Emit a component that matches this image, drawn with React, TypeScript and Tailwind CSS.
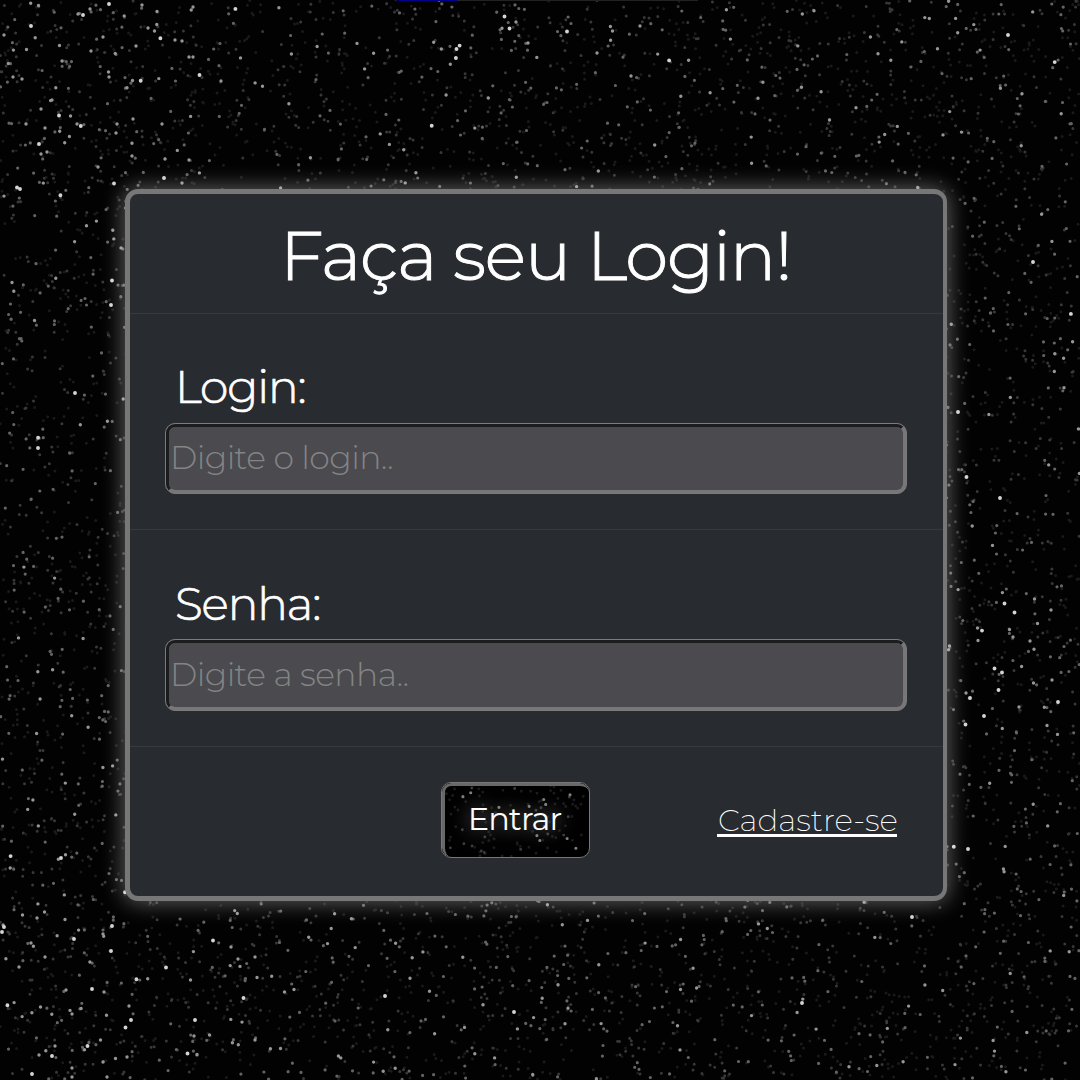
import React from 'react';

function random(seed: number) {
  let s = seed;
  return () => {
    s = (s + 0x6d2b79f5) | 0;
    let t = Math.imul(s ^ (s >>> 15), 1 | s);
    t = (t + Math.imul(t ^ (t >>> 7), 61 | t)) ^ t;
    return ((t ^ (t >>> 14)) >>> 0) / 4294967296;
  };
}

function scatter(seed: number, count: number, w: number, h: number) {
  const next = random(seed);
  let d = '';
  for (let i = 0; i < count; i++) {
    d += `M${(next() * w).toFixed(1)} ${(next() * h).toFixed(1)}h.01`;
  }
  return d;
}

const BRIGHT: [number, number][] = [
  [504.5, 16.5], [509.5, 28.5], [456.5, 49], [567, 31.5], [31, 26], [109, 4], [83, 15], [39, 144],
  [59, 115.5], [17, 187.5], [20, 189], [114, 183.5], [164, 178], [199.5, 75], [112, 280.5], [111, 305],
  [958, 412], [966.5, 477], [111, 951], [131, 1020], [195, 1020], [243.5, 998], [87.5, 1046], [52, 1056],
  [92, 989], [125.5, 1027.5], [32, 1074], [187.5, 1053.5], [166, 967.5], [4, 927], [2, 932], [112, 926],
  [74, 939], [213, 940.5], [1004.5, 603.5], [1014.5, 612.5], [994.5, 668.5], [1002, 672.5], [998.5, 690],
  [970, 698], [984, 716], [965.5, 724.5], [912, 917], [968, 849], [514, 1012], [1008, 35], [38, 448],
  [75, 393], [1000, 498], [1033, 262], [385, 996], [802, 1003], [1058, 702], [61, 858],
];

const MEDIUM: [number, number][] = [
  [640, 26], [528, 43], [597, 53], [612.5, 31], [516, 22], [4, 35], [26.5, 49.5], [38.5, 5.5],
  [90, 9], [78, 14], [142, 5], [157, 11.5], [193, 7], [103, 37], [91, 51], [59.5, 45.5], [62, 61],
  [108.5, 72], [109, 77], [132.5, 80.5], [13, 77], [22, 79], [41, 109], [52, 100], [77, 124],
  [26, 124], [45, 128], [117, 124], [116, 133], [47, 152], [41, 154], [98, 167], [132, 156],
  [162, 124], [133, 119], [189, 57], [193, 57], [182, 41], [175, 40], [136, 46], [148, 28],
  [154.5, 31], [165, 159], [189, 160], [182, 183], [44.5, 912], [22.5, 915], [37, 918], [103, 934],
  [31, 943], [45, 957], [19, 967], [66, 990], [104, 992], [40.5, 1007], [72, 1014], [129, 1006],
  [190.5, 980], [257, 977.5], [294, 989.5], [284.5, 992], [231, 947], [255, 957], [238, 959],
  [209.5, 1035], [194, 1036], [100.5, 1040], [55, 1046], [39, 1055], [127, 1057], [115.5, 1058.5],
  [103, 1062], [72, 1068], [72, 1077], [107, 1077], [255, 1040], [280.5, 1048.5], [197, 1054.5],
  [977.5, 628], [1009.5, 629.5], [1013, 637], [1037.5, 623.5], [1034.5, 599], [1051, 610], [1030, 641],
  [1033.5, 683], [1052, 680], [1019, 707], [1047, 725.5], [949.5, 646], [978, 640.5], [966, 693],
];

function place(points: [number, number][]) {
  return points.map(([x, y]) => `M${x} ${y}h.01`).join('');
}

const LAYERS = [
  { d: scatter(11, 5200, 1080, 1080), color: '#1a1a1a', width: 3 },
  { d: scatter(23, 2700, 1080, 1080), color: '#383838', width: 3 },
  { d: scatter(37, 1600, 1080, 1080), color: '#646464', width: 3.2 },
  { d: scatter(51, 480, 1080, 1080) + place(MEDIUM), color: '#969696', width: 3.4 },
  { d: scatter(77, 50, 1080, 1080) + place(BRIGHT), color: '#d4d4d4', width: 3.9 },
];

const BUTTON_LAYERS = [
  { d: scatter(5, 80, 148, 76), color: '#1b1b1b', width: 3 },
  { d: scatter(9, 18, 148, 76), color: '#3c3c3c', width: 3 },
  { d: 'M57 25h.01M103 17h.01M105 22h.01M130 12h.01M96 54h.01M99 59h.01M136 67h.01M127 57h.01M88 24h.01M28 10h.01M20 14h.01', color: '#808080', width: 3.2 },
];

type Layer = { d: string; color: string; width: number };

function Stars({ layers, viewBox }: { layers: Layer[]; viewBox: string }) {
  return (
    <svg className="pointer-events-none absolute inset-0 h-full w-full blur-[0.5px]" viewBox={viewBox} aria-hidden="true">
      {layers.map((l, i) => (
        <path key={i} d={l.d} stroke={l.color} strokeWidth={l.width} strokeLinecap="round" fill="none" />
      ))}
    </svg>
  );
}

function Field({ id, label, placeholder, type, height, inputHeight, labelClass }: {
  id: string; label: string; placeholder: string; type: string; height: string; inputHeight: string; labelClass: string;
}) {
  return (
    <div className={`border-b border-[#36393e] pt-[46px] pr-9 pl-[35px] ${height}`}>
      <label htmlFor={id} className={`block h-[63px] text-[45.5px] font-light text-white [-webkit-text-stroke:0.7px_white] ${labelClass}`}>
        {label}
      </label>
      <div className={`rounded-[10px] border border-[#7b7b7b] bg-[#777] ${inputHeight}`}>
        <input
          id={id}
          type={type}
          placeholder={placeholder}
          className="block h-full w-full rounded-[9px] border-[3px] border-t-[#1b1c1e] border-r-[#777] border-b-[#777] border-l-[#1b1c1e] bg-[linear-gradient(#4a4a4f,#4a4a4f)] bg-clip-padding pb-[3px] pl-px text-[33px] font-light tracking-[-0.55px] text-white outline-none placeholder:text-[#848484]"
        />
      </div>
    </div>
  );
}

export default function App() {
  return (
    <main className="relative h-[1080px] w-[1080px] overflow-hidden bg-[#020202] font-['Montserrat','Inter',sans-serif]">
      <Stars layers={LAYERS} viewBox="0 0 1080 1080" />
      <div className="relative flex h-px pl-[398px]">
        <div className="w-[59px] bg-[#00008b]" />
        <div className="w-[241px] bg-[#222]" />
      </div>
      <form
        onSubmit={(e) => e.preventDefault()}
        className="relative mt-[188px] ml-[125px] flex h-[712px] w-[822px] flex-col rounded-[13px] border-[5px] border-r-4 border-[#777] bg-[#282b30] shadow-[0_0_22px_2px_rgba(255,255,255,0.36)]"
      >
        <h1 className="h-[120px] border-b border-[#36393e] pl-[150px] text-[69px] leading-[122px] font-light tracking-[-1.1px] whitespace-nowrap text-white [-webkit-text-stroke:1px_white]">
          Faça seu Login!
        </h1>
        <Field id="login" label="Login:" placeholder="Digite o login.." type="text" height="h-[216px]" inputHeight="h-[71px]" labelClass="pl-[10px] leading-[53px] tracking-[-1.1px]" />
        <Field id="senha" label="Senha:" placeholder="Digite a senha.." type="password" height="h-[217px]" inputHeight="h-[72px]" labelClass="pl-[10px] leading-[56px] tracking-[-1.1px]" />
        <div className="flex pt-[35px] pl-[311px]">
          <button className="relative h-[76px] w-[149px] overflow-hidden rounded-[10px] border border-[#777] bg-black">
            <Stars layers={BUTTON_LAYERS} viewBox="0 0 148 76" />
            <span className="absolute inset-0 rounded-[9px] border-t-[3px] border-l-[3px] border-[#686868]" />
            <span className="relative block pr-[2px] pb-[2px] text-[32px] leading-[70px] tracking-[-0.95px] text-white [text-shadow:0_0_20px_#999]">Entrar</span>
          </button>
          <a href="#" className="mt-[19px] ml-[127px] block h-[36px] w-[180px] border-b-[3px] border-white pl-px text-[31px] leading-[38px] font-extralight whitespace-nowrap text-white">
            Cadastre-se
          </a>
        </div>
      </form>
    </main>
  );
}
